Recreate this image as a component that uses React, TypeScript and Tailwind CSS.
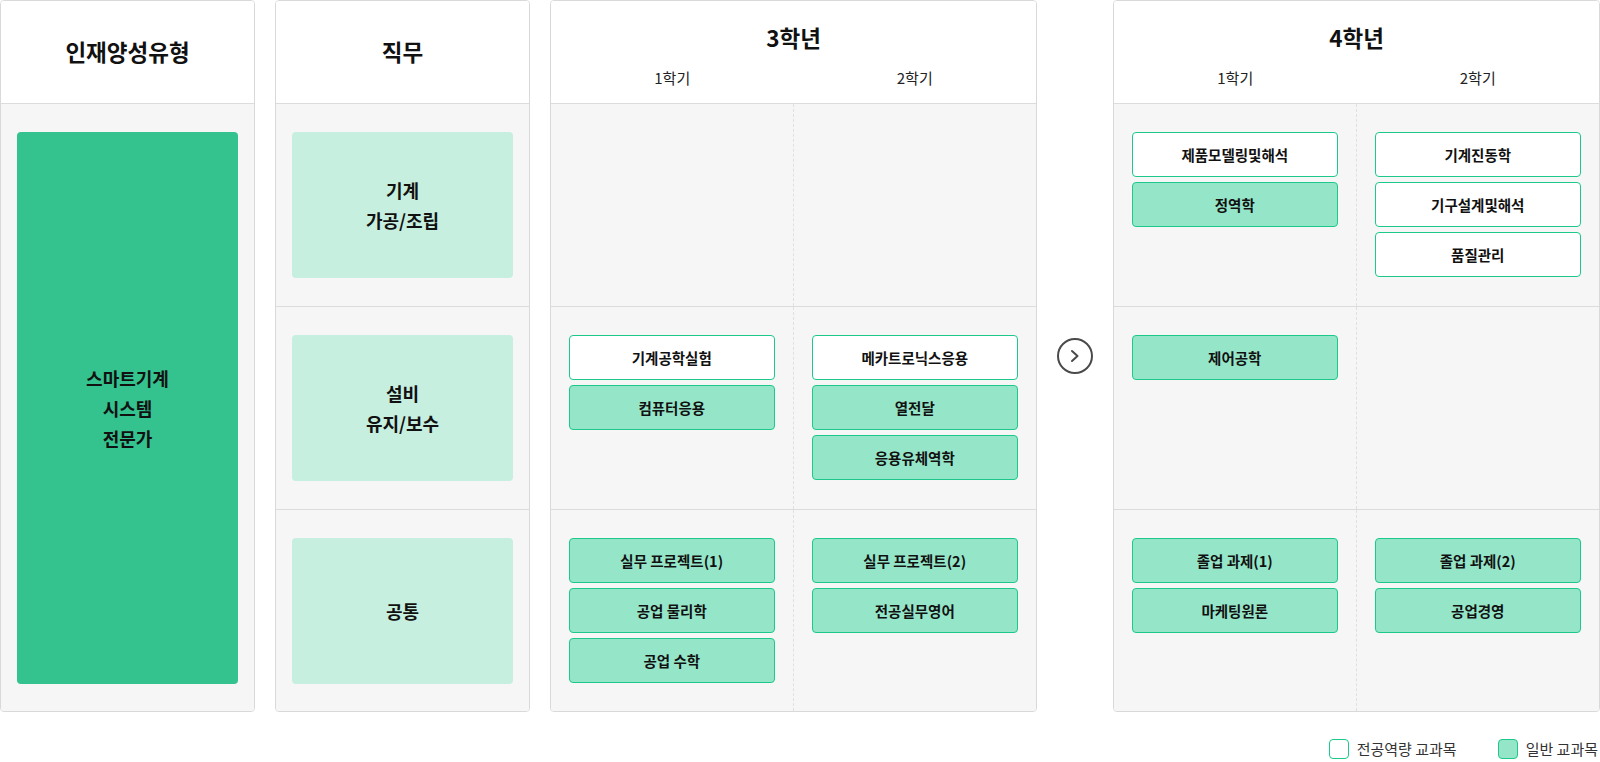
type Course = { name: string; core?: boolean };

type YearData = {
  title: string;
  rows: [Course[], Course[]][];
};

const jobs = [['기계', '가공/조립'], ['설비', '유지/보수'], ['공통']];

const years: YearData[] = [
  {
    title: '3학년',
    rows: [
      [[], []],
      [
        [{ name: '기계공학실험', core: true }, { name: '컴퓨터응용' }],
        [{ name: '메카트로닉스응용', core: true }, { name: '열전달' }, { name: '응용유체역학' }],
      ],
      [
        [{ name: '실무 프로젝트(1)' }, { name: '공업 물리학' }, { name: '공업 수학' }],
        [{ name: '실무 프로젝트(2)' }, { name: '전공실무영어' }],
      ],
    ],
  },
  {
    title: '4학년',
    rows: [
      [
        [{ name: '제품모델링및해석', core: true }, { name: '정역학' }],
        [{ name: '기계진동학', core: true }, { name: '기구설계및해석', core: true }, { name: '품질관리', core: true }],
      ],
      [[{ name: '제어공학' }], []],
      [
        [{ name: '졸업 과제(1)' }, { name: '마케팅원론' }],
        [{ name: '졸업 과제(2)' }, { name: '공업경영' }],
      ],
    ],
  },
];

function CourseBox({ course }: { course: Course }) {
  return (
    <div
      className={`flex h-[45px] items-center justify-center rounded-[4px] border border-[#1cc98b] text-[14.5px] font-bold text-[#111] ${
        course.core ? 'bg-white' : 'bg-[#95e6c9]'
      }`}
    >
      {course.name}
    </div>
  );
}

function SimpleHeader({ label }: { label: string }) {
  return (
    <div className="flex h-[103px] items-center justify-center border-b border-[#dcdcdc] bg-white text-[22.5px] font-bold text-[#111]">
      {label}
    </div>
  );
}

function YearCard({ data }: { data: YearData }) {
  return (
    <div className="flex h-[712px] w-[487px] flex-col overflow-hidden rounded-[4px] border border-[#d9d9d9]">
      <div className="h-[103px] border-b border-[#dcdcdc] bg-white pt-[21px]">
        <div className="text-center text-[22.5px] leading-[30px] font-bold text-[#111]">{data.title}</div>
        <div className="mt-[16px] grid grid-cols-2 text-center text-[15px] leading-[20px] text-[#222]">
          <span>1학기</span>
          <span>2학기</span>
        </div>
      </div>
      <div className="flex flex-1 flex-col bg-[#f6f6f6]">
        {data.rows.map((row, i) => (
          <div
            key={i}
            className={`grid grid-cols-2 ${i < 2 ? 'h-[203px] border-b border-[#dcdcdc]' : 'flex-1'}`}
          >
            {row.map((list, j) => (
              <div
                key={j}
                className={`flex flex-col gap-[5px] px-[18px] pt-[28px] ${
                  j === 0 ? 'border-r border-dashed border-[#e0e0e0]' : ''
                }`}
              >
                {list.map((c) => (
                  <CourseBox key={c.name} course={c} />
                ))}
              </div>
            ))}
          </div>
        ))}
      </div>
    </div>
  );
}

export default function App() {
  return (
    <div className="h-[762px] w-[1600px] overflow-hidden bg-white font-['Noto_Sans_CJK_KR',sans-serif]">
      <div className="flex">
        <div className="mr-[20px] flex h-[712px] w-[255px] flex-col overflow-hidden rounded-[4px] border border-[#d9d9d9]">
          <SimpleHeader label="인재양성유형" />
          <div className="flex flex-1 bg-[#f6f6f6] px-[16px] pt-[28px] pb-[27px]">
            <div className="flex flex-1 flex-col items-center justify-center rounded-[4px] bg-[#34c28f] text-[18px] leading-[30px] font-bold text-[#111]">
              <span>스마트기계</span>
              <span>시스템</span>
              <span>전문가</span>
            </div>
          </div>
        </div>

        <div className="mr-[20px] flex h-[712px] w-[255px] flex-col overflow-hidden rounded-[4px] border border-[#d9d9d9]">
          <SimpleHeader label="직무" />
          <div className="flex flex-1 flex-col bg-[#f6f6f6]">
            {jobs.map((lines, i) => (
              <div
                key={i}
                className={`px-[16px] pt-[28px] ${i < 2 ? 'h-[203px] border-b border-[#dcdcdc]' : 'flex-1'}`}
              >
                <div className="flex h-[146px] flex-col items-center justify-center rounded-[4px] bg-[#c6efdf] text-[18px] leading-[30px] font-bold text-[#111]">
                  {lines.map((l) => (
                    <span key={l}>{l}</span>
                  ))}
                </div>
              </div>
            ))}
          </div>
        </div>

        <YearCard data={years[0]} />

        <div className="flex h-[712px] w-[76px] items-center justify-center">
          <svg width="38" height="38" viewBox="0 0 38 38" fill="none">
            <circle cx="19" cy="19" r="17" stroke="#4a4a4a" strokeWidth="2" />
            <polyline
              points="16,14 21.5,19 16,24"
              stroke="#4a4a4a"
              strokeWidth="2"
              strokeLinecap="round"
              strokeLinejoin="round"
            />
          </svg>
        </div>

        <YearCard data={years[1]} />
      </div>

      <div className="mt-[27px] flex justify-end gap-[41px] pr-[2px] text-[15px] leading-[20px] text-[#333]">
        <div className="flex items-center gap-[8px]">
          <span className="h-[20px] w-[20px] rounded-[4px] border-[1.5px] border-[#1cc98b] bg-white" />
          <span>전공역량 교과목</span>
        </div>
        <div className="flex items-center gap-[8px]">
          <span className="h-[20px] w-[20px] rounded-[4px] border-[1.5px] border-[#1cc98b] bg-[#95e6c9]" />
          <span>일반 교과목</span>
        </div>
      </div>
    </div>
  );
}
